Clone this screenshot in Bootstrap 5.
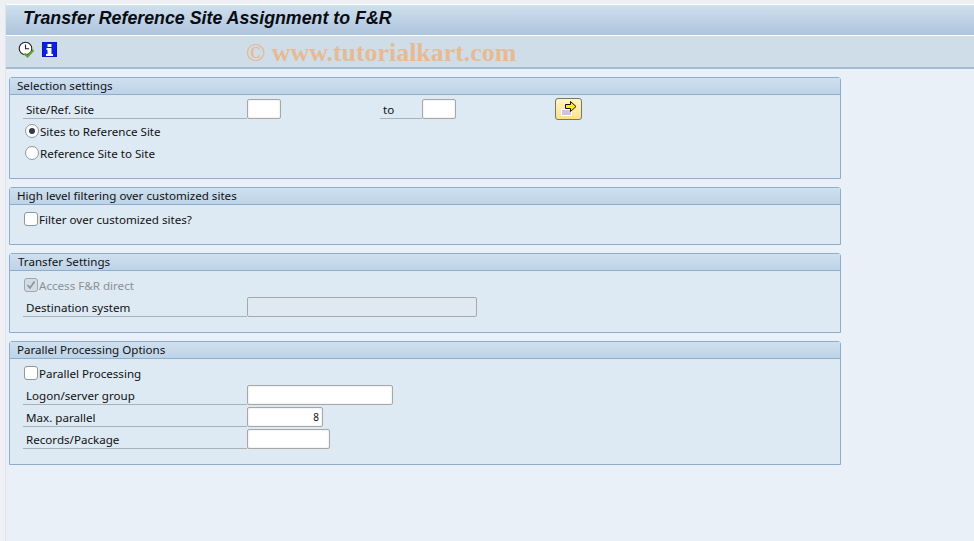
<!DOCTYPE html>
<html lang="en"><head><meta charset="utf-8"><title>Transfer Reference Site Assignment to F&amp;R</title>
<link href="https://cdn.jsdelivr.net/npm/bootstrap@5.3.0/dist/css/bootstrap.min.css" rel="stylesheet">
<style>
html,body{height:541px;overflow:hidden}
body{background:#fff;font-family:"Noto Sans","DejaVu Sans",sans-serif;font-size:11.600px;line-height:1;color:#111}
.sap-shell{height:541px;padding-top:4px;background:#eef0f3}
.sap-frame{margin-left:5px;height:537px;background:#e9f0f7;border-left:1px solid #dfe4ea}
.sap-title{height:32px;padding:0 0 3px 17px;background:linear-gradient(#cfe0ee,#adc4dc);border-top:1px solid #fff;border-bottom:1px solid #fff;font:italic 700 17.800px "Liberation Sans",Arial,sans-serif;color:#0b0b12}
.sap-tools{height:33px;padding:0 0 4px 12px;background:#cfdde8;border-bottom:2px solid #a5b9cf}
.sap-gap{width:6px}
.sap-mark{margin-left:189px;margin-top:7px;font:700 25.900px "Liberation Serif",serif;color:#e6bb93;white-space:nowrap}
.sap-panels{padding:8px 0 0 3px;width:838px}
.sap-panel{width:832px;margin-bottom:8px;background:#dde9f3;border:1px solid #8eadcc;border-top-left-radius:3px;border-top-right-radius:3px}
.sap-head{height:17px;padding-left:7px;background:linear-gradient(#cfe0ef,#bdd3e7);border-bottom:1px solid #8eadcc;white-space:nowrap}
.sap-body{padding:3px 0 14px 13px}
.sap-row{height:22px}
.sap-text{padding-top:2px}
.sap-label{height:21px;padding:3px 0 0 3px;border-bottom:1px solid #a9b2ba;white-space:nowrap}
.w-main{width:224px}
.w-to{width:42px;margin-left:99px}
.sap-input{height:20px;margin-top:1px;background:#fff;border:1px solid #a7a7a7;border-radius:2px;box-shadow:inset 0 0 2px #d8d8d8;text-align:right;padding:0 3px;font-size:10px;line-height:18px}
.sap-input.off{background:#e0e9f1;border-color:#a3a9ae;box-shadow:none}
.w34{width:34px}.w230{width:230px}.w146{width:146px}.w76{width:76px}.w83{width:83px}
.sap-check{width:14px;height:14px;flex:none;margin:0 1px 0 1px;background:#fff;border:1px solid #8f979e;border-radius:3px}
.sap-check.off{background:#d3dce4;border-color:#a0a7ad}
.sap-radio{width:14px;height:14px;flex:none;margin:0 1px 0 2px;background:#fff;border:1px solid #8f979e;border-radius:50%}
.sap-dot{width:6px;height:6px;background:#33384a;border-radius:50%}
.sap-muted{color:#8b9095}
.sap-btn{width:27px;height:22px;margin-left:99px;padding:0;background:linear-gradient(#fff4c4,#fde28f);border:1px solid #77766a;border-radius:3px}
</style></head><body>
<div class="sap-shell"><div class="sap-frame">
<div class="sap-title d-flex align-items-center">Transfer Reference Site Assignment to F&amp;R</div>
<div class="sap-tools d-flex align-items-center">
<svg width="18" height="18" viewBox="0 0 18 18"><circle cx="7.500" cy="7.500" r="6.300" fill="#fff" stroke="#222" stroke-width="1.100"/><path d="M7.500 3.500v4.200h3.600" fill="none" stroke="#222" stroke-width="1.100"/><path d="M6.500 12.500l3 3 6-6.500" fill="none" stroke="#5fa22e" stroke-width="2.200"/></svg>
<span class="sap-gap"></span>
<svg width="15" height="15" viewBox="0 0 15 15"><rect width="15" height="15" fill="#0a16c8"/><rect x="1" y="1" width="13" height="13" fill="#0c20e0"/><path d="M5.500 2h4v3h-4zM4.500 6h5v6H11v2H4v-2h1.500V8h-1z" fill="#fff"/></svg>
<div class="sap-mark">© www.tutorialkart.com</div>
</div>
<div class="sap-panels">
<section class="sap-panel"><div class="sap-head d-flex align-items-center">Selection settings</div>
<div class="sap-body">
<div class="sap-row d-flex align-items-start"><div class="sap-label w-main d-flex align-items-center">Site/Ref. Site</div><div class="sap-input w34"></div><div class="sap-label w-to d-flex align-items-center">to</div><div class="sap-input w34"></div><button class="sap-btn d-flex align-items-center justify-content-center" type="button" aria-label="Multiple selection"><svg width="18" height="16" viewBox="0 0 18 16"><rect x="1.500" y="8.500" width="10" height="6" fill="#d4c2dc" stroke="#fff"/><path d="M5.500 3.500h5v-3l5.500 5-5.500 5v-3h-5z" fill="#ffec00" stroke="#111"/></svg></button></div>
<div class="sap-row d-flex align-items-center"><span class="sap-radio d-flex align-items-center justify-content-center"><span class="sap-dot"></span></span><span class="sap-text">Sites to Reference Site</span></div>
<div class="sap-row d-flex align-items-center"><span class="sap-radio"></span><span class="sap-text">Reference Site to Site</span></div>
</div></section>
<section class="sap-panel"><div class="sap-head d-flex align-items-center">High level filtering over customized sites</div>
<div class="sap-body"><div class="sap-row d-flex align-items-center"><span class="sap-check"></span><span class="sap-text">Filter over customized sites?</span></div></div></section>
<section class="sap-panel"><div class="sap-head d-flex align-items-center ps-2">Transfer Settings</div>
<div class="sap-body">
<div class="sap-row d-flex align-items-center sap-muted"><span class="sap-check off d-flex"><svg width="12" height="12" viewBox="0 0 12 12"><path d="M2.500 6l2.500 3 4.500-6.500" fill="none" stroke="#8a9096" stroke-width="1.600"/></svg></span><span class="sap-text">Access F&amp;R direct</span></div>
<div class="sap-row d-flex align-items-start"><div class="sap-label w-main d-flex align-items-center">Destination system</div><div class="sap-input off w230"></div></div>
</div></section>
<section class="sap-panel"><div class="sap-head d-flex align-items-center">Parallel Processing Options</div>
<div class="sap-body">
<div class="sap-row d-flex align-items-center"><span class="sap-check"></span><span class="sap-text">Parallel Processing</span></div>
<div class="sap-row d-flex align-items-start"><div class="sap-label w-main d-flex align-items-center">Logon/server group</div><div class="sap-input w146"></div></div>
<div class="sap-row d-flex align-items-start"><div class="sap-label w-main d-flex align-items-center">Max. parallel</div><div class="sap-input w76">8</div></div>
<div class="sap-row d-flex align-items-start"><div class="sap-label w-main d-flex align-items-center">Records/Package</div><div class="sap-input w83"></div></div>
</div></section>
</div>
</div></div>
<script src="https://cdn.jsdelivr.net/npm/bootstrap@5.3.0/dist/js/bootstrap.bundle.min.js"></script>
</body></html>
